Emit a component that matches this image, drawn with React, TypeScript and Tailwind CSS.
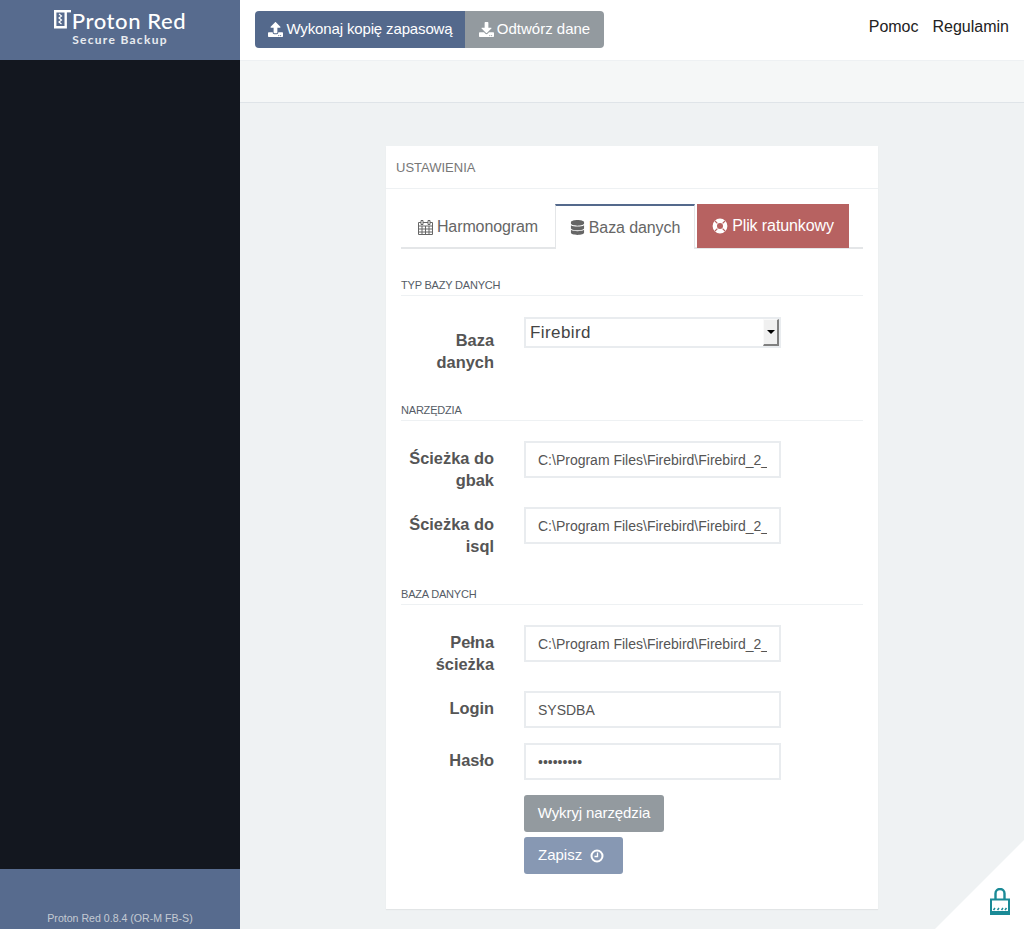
import { FaUpload, FaDownload, FaDatabase } from 'react-icons/fa'

function SectionTitle({ title }: { title: string }) {
  return (
    <div className="h-[32px] border-b border-[#eef1f3] mb-[20px] pt-[15px] text-[11px] leading-[12px] tracking-[-0.2px] text-[#555c66]">
      {title}
    </div>
  )
}

function Field({ label, value, type = 'text' }: { label: string; value: string; type?: string }) {
  return (
    <div className="flex mb-[15px]">
      <label className="w-[93px] pt-[6px] pb-[1px] text-right font-bold text-[16.4px] leading-[22px] text-[#555555]">{label}</label>
      <input
        type={type}
        defaultValue={value}
        className="ml-[30px] w-[257px] h-[37px] border-2 border-[#e9ecef] bg-white px-3 text-sm text-[#555555] outline-none"
      />
    </div>
  )
}

function LogoMark() {
  return (
    <svg width="17" height="19" viewBox="0 0 17 19" className="mt-[1px] shrink-0">
      <path d="M1.200 1.200h10.500v16H1.200z" fill="none" stroke="#fff" strokeWidth="2.400" />
      <path d="M11 1.200h6" stroke="#fff" strokeWidth="2.400" />
      <path d="M5 4l2.500 2-2.500 2 2.500 2-2.500 2 2.500 2" fill="none" stroke="#fff" strokeWidth="1.200" />
    </svg>
  )
}

function CalendarIcon() {
  return (
    <svg width="15" height="16" viewBox="0 0 15 16" className="shrink-0">
      <path d="M.5 3.500h14v12H.5zM.5 7h14M.5 10h14M.5 13h14M4 7v8M7.500 7v8M11 7v8" fill="none" stroke="#666" strokeWidth="1" />
      <path d="M3 1.500h2v4H3zM10 1.500h2v4h-2z" fill="#fff" stroke="#666" strokeWidth="1" />
    </svg>
  )
}

function RingIcon() {
  return (
    <svg width="16" height="16" viewBox="0 0 16 16" className="shrink-0">
      <circle cx="8" cy="8" r="5.200" fill="none" stroke="#fff" strokeWidth="4.400" />
      <path d="M3 3l2.400 2.400M13 3l-2.400 2.400M3 13l2.400-2.400M13 13l-2.400-2.400" stroke="#b76261" strokeWidth="1.200" />
    </svg>
  )
}

function ClockIcon() {
  return (
    <svg width="14" height="14" viewBox="0 0 14 14" className="shrink-0">
      <circle cx="7" cy="7" r="5.500" fill="none" stroke="#fff" strokeWidth="2" />
      <path d="M7.500 3.500v4H4.500" fill="none" stroke="#fff" strokeWidth="1.300" />
    </svg>
  )
}

export default function App() {
  return (
    <div className="relative flex h-[929px] overflow-hidden bg-[#eff2f3] font-['Liberation_Sans',Arial,sans-serif]">
      {/* Sidebar */}
      <aside className="flex w-60 shrink-0 flex-col bg-[#13171f]">
        <div className="flex h-[60px] flex-col items-center bg-[#576b8e] pt-[9px] text-white">
          <div className="flex items-start gap-[1px]">
            <LogoMark />
            <span className="font-['Lato',sans-serif] font-medium text-[22px] leading-[24px] tracking-[0.6px]">Proton Red</span>
          </div>
          <div className="mt-[1px] font-['Lato',sans-serif] font-bold text-[12px] leading-[12px] tracking-[1.3px] text-[#e8ebf0]">Secure Backup</div>
        </div>
        <div className="flex-1" />
        <div className="h-[60px] bg-[#576b8e] pt-[42px] text-center text-[10.6px] leading-[14px] text-[#c4cad3]">
          Proton Red 0.8.4 (OR-M FB-S)
        </div>
      </aside>

      <main className="flex min-w-0 flex-1 flex-col">
        {/* Top bar */}
        <header className="flex h-[61px] shrink-0 items-start justify-between border-b border-[#eef1f3] bg-white pl-[15px] pr-[15px]">
          <div className="mt-[11px] flex text-[15px] text-white">
            <button className="flex h-[37px] w-[210px] items-center justify-center gap-[3px] rounded-l bg-[#54698c] pl-[1px] tracking-[-0.14px]">
              <FaUpload className="text-[15px]" /> Wykonaj kopię zapasową
            </button>
            <button className="flex h-[37px] w-[139px] items-center justify-center gap-[3px] rounded-r bg-[#939a9f]">
              <FaDownload className="text-[15px]" /> Odtwórz dane
            </button>
          </div>
          <nav className="mt-[18px] flex gap-[14px] text-base leading-[18px] text-[#222222]">
            <a>Pomoc</a>
            <a>Regulamin</a>
          </nav>
        </header>
        <div className="h-[42px] shrink-0 border-b border-[#dfe4e8] bg-[#f5f7f7]" />

        {/* Settings card */}
        <div className="flex-1 pl-[146px] pt-[43px]">
          <div className="h-[763px] w-[492px] bg-white shadow-[0_1px_1px_rgba(0,0,0,0.05)]">
            <div className="h-[43px] border-b border-[#eef1f3] pl-[10px] pt-[14px] text-[13px] leading-[16px] text-[#777777]">
              USTAWIENIA
            </div>
            <div className="px-[15px] pt-[15px]">
              <div className="flex h-[45px] border-b-2 border-[#e4e6e8] text-base tracking-[-0.1px]">
                <button className="flex h-[44px] w-[154px] items-center justify-center gap-[4px] pt-[1px] text-[#666666]">
                  <CalendarIcon /> Harmonogram
                </button>
                <button className="-mb-[2px] flex h-[45px] w-[140px] items-center justify-center gap-1 border-x border-t-2 border-x-[#e4e6e8] border-t-[#54698c] bg-white text-[#666666]">
                  <FaDatabase className="text-[15px]" /> Baza danych
                </button>
                <button className="ml-[2px] flex h-[44px] w-[152px] items-center justify-center gap-1 bg-[#b76261] text-white">
                  <RingIcon /> Plik ratunkowy
                </button>
              </div>

              <div className="pt-[15px]">
                <div className="pb-[1px]">
                  <SectionTitle title="TYP BAZY DANYCH" />
                </div>
                <div className="flex mb-[16px]">
                  <label className="w-[93px] pt-[12px] text-right font-bold text-[16.4px] leading-[22px] text-[#555555]">Baza danych</label>
                  <div className="relative ml-[30px] h-[31px] w-[257px] border-2 border-[#e9ecef] bg-white pl-[4px] text-[17px] leading-[27px] tracking-[0.4px] text-[#444444]">
                    Firebird
                    <span className="absolute right-0 top-0 flex h-[27px] w-[16px] items-center justify-center border border-[#fafafa] border-r-2 border-b-2 border-r-[#808080] border-b-[#808080] bg-[#f0f0f0]">
                      <span className="border-x-[4px] border-t-[4px] border-x-transparent border-t-black" />
                    </span>
                  </div>
                </div>

                <SectionTitle title="NARZĘDZIA" />
                <Field label="Ścieżka do gbak" value="C:\Program Files\Firebird\Firebird_2_5\bin\gbak.exe" />
                <Field label="Ścieżka do isql" value="C:\Program Files\Firebird\Firebird_2_5\bin\isql.exe" />

                <SectionTitle title="BAZA DANYCH" />
                <Field label="Pełna ścieżka" value="C:\Program Files\Firebird\Firebird_2_5\data.fdb" />
                <Field label="Login" value="SYSDBA" />
                <Field label="Hasło" value="masterkey" type="password" />

                <div className="ml-[123px] flex flex-col items-start gap-[5px] text-[15px] text-white">
                  <button className="h-[37px] w-[140px] rounded-[3px] bg-[#939a9f] tracking-[-0.1px]">Wykryj narzędzia</button>
                  <button className="flex h-[37px] w-[99px] items-center gap-[8px] rounded-[3px] bg-[#8798b3] pl-[14px]">
                    Zapisz <ClockIcon />
                  </button>
                </div>
              </div>
            </div>
          </div>
        </div>
      </main>

      {/* Lock corner */}
      <div className="absolute bottom-0 right-0 h-[89px] w-[89px] bg-white [clip-path:polygon(100%_0,100%_100%,0_100%)]" />
      <svg className="absolute bottom-[14px] right-[14px]" width="20" height="27" viewBox="0 0 20 27">
        <path d="M5.500 11V5.500a4.500 4.500 0 0 1 9 0V11" fill="none" stroke="#1a8a96" strokeWidth="2.400" />
        <path d="M1 11.500h18V26H1z" fill="none" stroke="#1a8a96" strokeWidth="2" />
        <path d="M1 23h18v4H1z" fill="#1a8a96" />
        <path d="M3.500 22l1.500-2M7.500 22l1.500-2M11.500 22l1.500-2M15 22l1.500-2" stroke="#1a8a96" strokeWidth="1.500" />
      </svg>
    </div>
  )
}
